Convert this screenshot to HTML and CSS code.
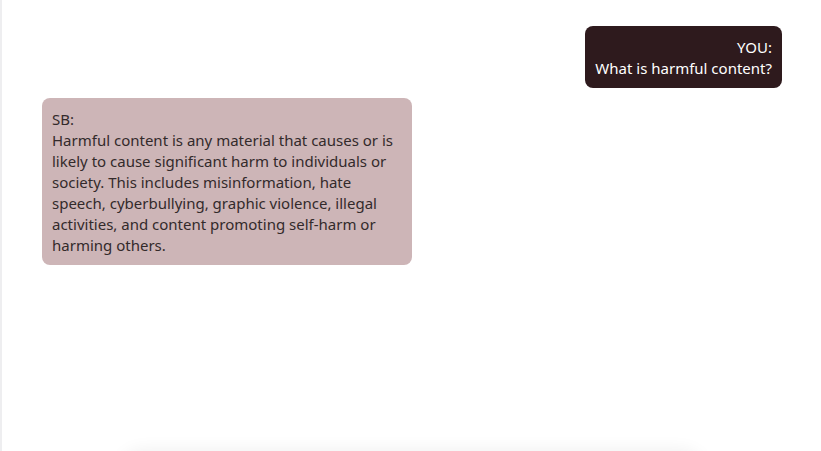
FILE: index.html
```html
<!DOCTYPE html>
<html lang="en">
<head>
<meta charset="utf-8">
<title>Chat</title>
<link rel="stylesheet" href="styles.css">
</head>
<body>
<div class="app">
  <main class="chat">
    <div class="msg msg-user">YOU:<br>What is harmful content?</div>
    <div class="msg msg-bot">SB:<br>Harmful content is any material that causes or is likely to cause significant harm to individuals or society. This includes misinformation, hate speech, cyberbullying, graphic violence, illegal activities, and content promoting self-harm or harming others.</div>
  </main>
  <div class="composer"></div>
</div>
</body>
</html>
```

FILE: styles.css
```css
html, body {
  margin: 0;
  padding: 0;
  height: 100%;
  overflow: hidden;
  background: #ffffff;
}
.app {
  height: 100vh;
  border-left: 2px solid #eeeef0;
  display: flex;
  flex-direction: column;
  align-items: center;
}
.chat {
  align-self: stretch;
  flex: 0 0 451px;
  box-sizing: border-box;
  padding: 26px 39px 0 40px;
  display: flex;
  flex-direction: column;
  gap: 10px;
  font-family: "Noto Sans", "Open Sans", sans-serif;
  font-size: 15px;
  line-height: 21px;
}
.msg {
  padding: 11px 10px 9px;
  border-radius: 8px;
}
.msg-user {
  align-self: flex-end;
  background: #2e1a1d;
  color: #ffffff;
  text-align: right;
}
.msg-bot {
  align-self: flex-start;
  width: 350px;
  background: #cdb5b7;
  color: #332a2b;
}
.composer {
  width: 580px;
  height: 60px;
  flex: 0 0 60px;
  margin-top: 2px;
  background: #ffffff;
  box-shadow: 0 -2px 18px rgba(0, 0, 0, 0.07);
  border-radius: 20px;
}
```
